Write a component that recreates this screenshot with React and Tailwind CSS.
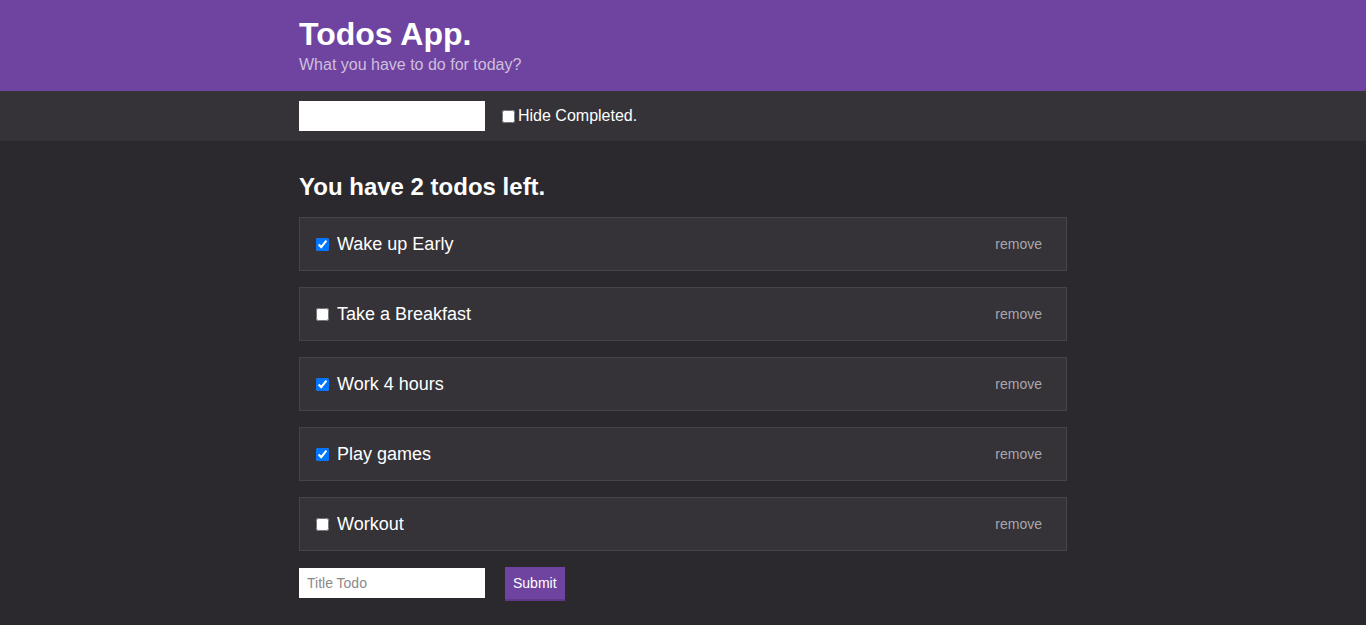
import React, { useState } from "react";

const initialTodos = [
  { id: 1, title: "Wake up Early", done: true },
  { id: 2, title: "Take a Breakfast", done: false },
  { id: 3, title: "Work 4 hours", done: true },
  { id: 4, title: "Play games", done: true },
  { id: 5, title: "Workout", done: false },
];

const TodoItem = ({ todo, onToggle, onRemove }) => (
  <li className="flex items-center h-[54px] pl-4 pr-6 bg-[#353238] border border-[#46434a]">
    <input
      type="checkbox"
      checked={todo.done}
      onChange={() => onToggle(todo.id)}
      className="w-[13px] h-[13px] mr-2 accent-[#0075ff]"
    />
    <span className="text-[18px] text-white flex-1">{todo.title}</span>
    <button
      onClick={() => onRemove(todo.id)}
      className="text-[14px] text-[#a9a7ad] cursor-pointer"
    >
      remove
    </button>
  </li>
);

export default function App() {
  const [todos, setTodos] = useState(initialTodos);
  const [hide, setHide] = useState(false);
  const [title, setTitle] = useState("");

  const left = todos.filter((t) => !t.done).length;
  const shown = hide ? todos.filter((t) => !t.done) : todos;

  const toggle = (id) =>
    setTodos(todos.map((t) => (t.id === id ? { ...t, done: !t.done } : t)));
  const remove = (id) => setTodos(todos.filter((t) => t.id !== id));
  const submit = (e) => {
    e.preventDefault();
    if (!title.trim()) return;
    setTodos([...todos, { id: Date.now(), title, done: false }]);
    setTitle("");
  };

  return (
    <div className="min-h-screen bg-[#2b292e] font-['Liberation_Sans',Arial,sans-serif]">
      {/* Header */}
      <header className="bg-[#6f44a0] h-[91px]">
        <div className="w-[768px] mx-auto pt-[15px]">
          <h1 className="text-[32px] font-bold text-white leading-[38px]">
            Todos App.
          </h1>
          <p className="text-[16px] text-[#cdbfdc] leading-[18px] mt-[3px]">
            What you have to do for today?
          </p>
        </div>
      </header>

      {/* Toolbar */}
      <div className="bg-[#353238] h-[50px]">
        <div className="w-[768px] mx-auto flex items-center h-full">
          <input type="text" className="w-[186px] h-[30px] bg-white outline-none px-2" />
          <label className="flex items-center ml-[17px] text-[16px] text-white">
            <input
              type="checkbox"
              checked={hide}
              onChange={() => setHide(!hide)}
              className="w-[13px] h-[13px] mr-[3px]"
            />
            Hide Completed.
          </label>
        </div>
      </div>

      {/* Todos */}
      <main className="w-[768px] mx-auto pt-[32px]">
        <h2 className="text-[24px] font-bold text-white leading-[28px] mb-4">
          You have {left} todos left.
        </h2>
        <ul className="flex flex-col gap-4">
          {shown.map((todo) => (
            <TodoItem key={todo.id} todo={todo} onToggle={toggle} onRemove={remove} />
          ))}
        </ul>
        <form onSubmit={submit} className="flex items-start mt-4 gap-5">
          <input
            type="text"
            value={title}
            onChange={(e) => setTitle(e.target.value)}
            placeholder="Title Todo"
            className="w-[186px] h-[30px] mt-[1px] bg-white px-2 text-[14px] outline-none placeholder:text-[#8a8a8a]"
          />
          <button
            type="submit"
            className="h-[34px] px-2 bg-[#6f44a0] border-b-2 border-[#5e3889] text-white text-[14px]"
          >
            Submit
          </button>
        </form>
      </main>
    </div>
  );
}
